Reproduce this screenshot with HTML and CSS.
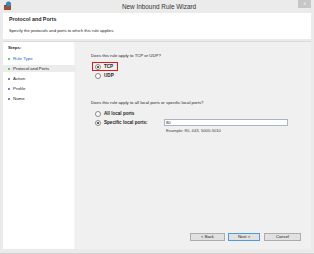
FILE: index.html
```html
<!DOCTYPE html>
<html lang="en">
<head>
<meta charset="UTF-8">
<title>New Inbound Rule Wizard</title>
<link rel="stylesheet" href="styles.css">
</head>
<body>

<div class="window">
    <div class="titlebar">
        <svg class="app-icon" width="8" height="9" viewBox="0 0 8 9">
            <rect x="0" y="4" width="7" height="5" fill="#8a3b22"/>
            <path d="M0 6h7M0 8h7M3 4v2M5 6v2M2 6v2" stroke="#c76a45" stroke-width="0.6"/>
            <circle cx="4.5" cy="3" r="2.6" fill="#2f7fd0"/>
            <path d="M3 1.6c1 .3 1.4 1 .9 1.8M5 4.5c.3-.8 1-1 1.6-.8" stroke="#5bb548" stroke-width="0.9" fill="none"/>
        </svg>
        <span class="title">New Inbound Rule Wizard</span>
        <span class="close">&#x2715;</span>
    </div>

    <div class="header">
        <p class="header-title">Protocol and Ports</p>
        <p class="header-sub">Specify the protocols and ports to which this rule applies.</p>
    </div>

    <div class="main">
        <div class="steps">
            <p class="steps-title">Steps:</p>
            <div class="step done link"><span class="dot"></span>Rule Type</div>
            <div class="step done current"><span class="dot"></span>Protocol and Ports</div>
            <div class="step"><span class="dot"></span>Action</div>
            <div class="step"><span class="dot"></span>Profile</div>
            <div class="step"><span class="dot"></span>Name</div>
        </div>

        <div class="content">
            <p class="question">Does this rule apply to TCP or UDP?</p>
            <div class="options">
                <div class="option outlined"><span class="radio checked"></span>TCP</div>
                <div class="option"><span class="radio"></span>UDP</div>
            </div>

            <p class="question second">Does this rule apply to all local ports or specific local ports?</p>
            <div class="options">
                <div class="option"><span class="radio"></span>All local ports</div>
                <div class="option">
                    <span class="radio checked"></span>
                    <span class="port-label">Specific local ports:</span>
                    <span class="port-input">80</span>
                </div>
                <p class="example">Example: 80, 443, 5000-5010</p>
            </div>

            <div class="buttons">
                <span class="btn">&lt; Back</span>
                <span class="btn default">Next &gt;</span>
                <span class="btn cancel">Cancel</span>
            </div>
        </div>
    </div>
</div>

</body>
</html>
```

FILE: styles.css
```css
body {
    margin: 0;
    font-family: "Liberation Sans", Arial, sans-serif;
    color: #1e1e1e;
}
p {
    margin: 0;
}
.window {
    width: 314px;
    height: 254px;
    box-sizing: border-box;
    background: #ebebeb;
    border-bottom: 1px solid #d2d2d2;
    display: flex;
    flex-direction: column;
}
.titlebar {
    height: 13px;
    display: flex;
    align-items: center;
}
.app-icon {
    margin-left: 4px;
    margin-top: -3px;
}
.title {
    flex: 1;
    text-align: center;
    font-size: 6.4px;
    color: #333;
    margin-left: 8px;
}
.close {
    width: 13px;
    height: 8px;
    margin-right: 3px;
    align-self: flex-start;
    background: #c6c6c6;
    color: #fff;
    font-size: 4px;
    line-height: 8px;
    text-align: center;
}
.header {
    margin: 0 3px;
    height: 26px;
    box-sizing: border-box;
    background: #fff;
    padding: 3px 0 0 6px;
}
.header-title {
    font-weight: bold;
    font-size: 5.3px;
    line-height: 7px;
}
.header-sub {
    font-size: 4.2px;
    margin-top: 5px;
}
.main {
    flex: 1;
    display: flex;
    margin: 2px 3px 4px 3px;
    border-top: 1px solid #dadada;
    background: #f0f0f0;
}
.steps {
    width: 73px;
    background: #fff;
    box-shadow: inset -3px 0 3px -2px #e6e6e6;
    padding-top: 3px;
}
.steps-title {
    font-weight: bold;
    font-size: 4.4px;
    padding-left: 5px;
    margin-bottom: 5px;
}
.step {
    display: flex;
    align-items: center;
    height: 7px;
    margin-bottom: 3px;
    font-size: 4.4px;
    padding-left: 5px;
}
.step .dot {
    width: 2px;
    height: 2px;
    border-radius: 50%;
    background: #5a4fc8;
    margin-right: 3px;
}
.step.done .dot {
    background: #3eb83e;
}
.step.link {
    color: #2f62c9;
}
.step.current {
    background: #ececec;
}
.content {
    flex: 1;
    display: flex;
    flex-direction: column;
    padding: 11px 10px 8px 15px;
    font-size: 4.3px;
}
.question.second {
    margin-top: 20px;
}
.options {
    margin-top: 4px;
    padding-left: 1px;
}
.option {
    display: flex;
    align-items: center;
    height: 9px;
    font-weight: bold;
    font-size: 4.6px;
    white-space: nowrap;
    padding-left: 3px;
}
.option.outlined {
    width: 26px;
    box-sizing: border-box;
    border: 1px solid #e01818;
    padding-left: 2px;
}
.radio {
    width: 4px;
    height: 4px;
    border: 0.6px solid #8a8a8a;
    border-radius: 50%;
    background: #fff;
    margin-right: 3px;
    display: flex;
    align-items: center;
    justify-content: center;
}
.radio.checked::after {
    content: "";
    width: 2px;
    height: 2px;
    border-radius: 50%;
    background: #222;
}
.port-label {
    width: 60px;
}
.port-input {
    width: 124px;
    height: 7px;
    box-sizing: border-box;
    border: 1px solid #a8b6c8;
    background: #fff;
    font-weight: normal;
    font-size: 4.2px;
    line-height: 5px;
    padding-left: 1px;
}
.example {
    margin: 1px 0 0 74px;
    font-size: 4.2px;
    font-weight: normal;
    color: #444;
}
.buttons {
    margin-top: auto;
    display: flex;
    justify-content: flex-end;
    gap: 3px;
}
.btn {
    width: 35px;
    height: 8px;
    box-sizing: border-box;
    border: 1px solid #adadad;
    background: #e1e1e1;
    font-size: 4.2px;
    line-height: 6px;
    text-align: center;
}
.btn.default {
    width: 32px;
    border-color: #4f9ae0;
}
.btn.cancel {
    width: 37px;
    margin-left: 1px;
}
```
